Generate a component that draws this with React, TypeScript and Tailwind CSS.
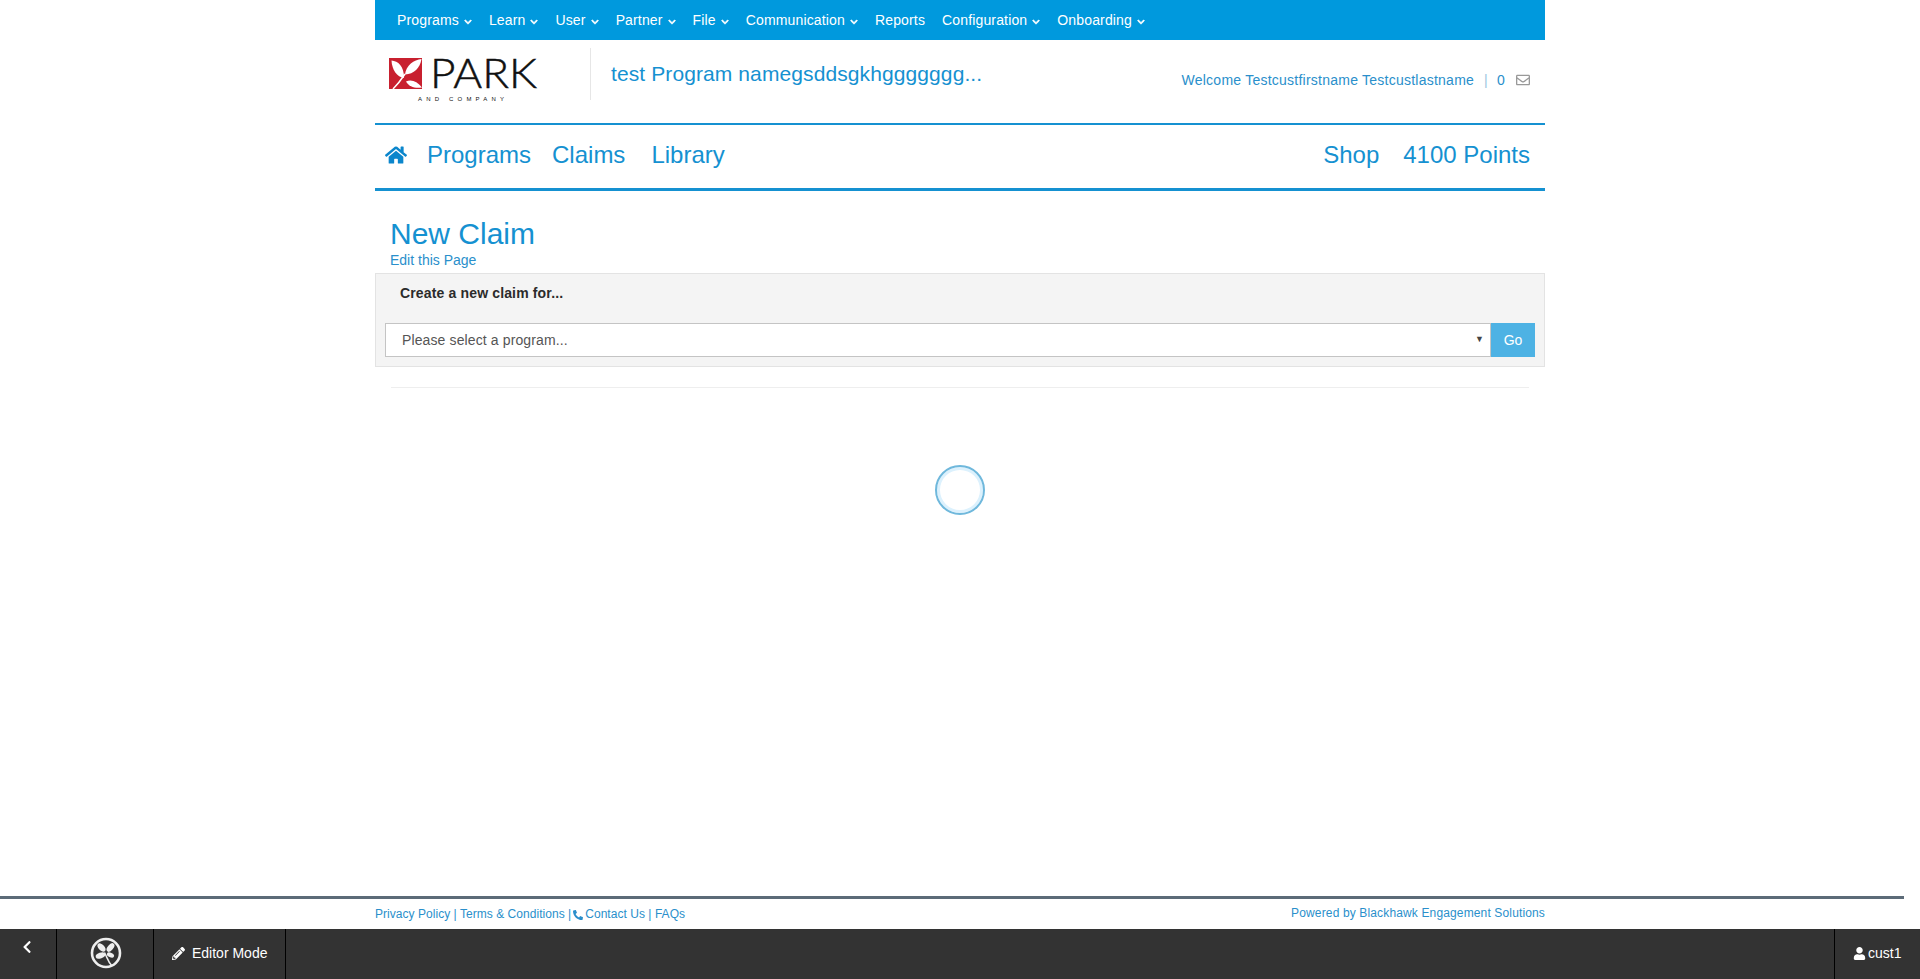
import { FaHome, FaChevronDown, FaRegEnvelope, FaPhone, FaPencilAlt, FaUser, FaChevronLeft } from "react-icons/fa";

const items: [string, boolean][] = [
  ["Programs", true],
  ["Learn", true],
  ["User", true],
  ["Partner", true],
  ["File", true],
  ["Communication", true],
  ["Reports", false],
  ["Configuration", true],
  ["Onboarding", true],
];

function ParkLogo() {
  return (
    <svg width="152" height="52" viewBox="0 0 152 52" className="block overflow-visible">
      <rect x="0" y="3" width="33" height="31" fill="#c8202f" />
      <path d="M2.5 5.5 C9 6 15 11 15 23 C8 22 3 15 2.5 5.5Z" fill="#fff" />
      <path d="M32.5 4 C25 5 17 10 16 19.5 C25 19 31 13 32.5 4Z" fill="#fff" />
      <path d="M17 26.5 C22 24 28 26 33 32.5 C26 33.5 20 32 17 26.5Z" fill="#fff" />
      <path d="M4 34 C9 29 12 25 16 19" stroke="#fff" strokeWidth="1.5" fill="none" />
      <text x="41" y="33" fontFamily="Lato, sans-serif" fontWeight="300" stroke="#111" strokeWidth="0.5" fontSize="41" fill="#111" textLength="107" lengthAdjust="spacingAndGlyphs">PARK</text>
      <text x="29" y="46" fontFamily="'Liberation Sans', sans-serif" fontSize="6" fill="#111" textLength="86">AND  COMPANY</text>
    </svg>
  );
}

function BarLogo() {
  return (
    <svg width="32" height="34" viewBox="0 0 32 34" className="block">
      <circle cx="16" cy="16" r="14" fill="none" stroke="#eee" strokeWidth="2.6" />
      <ellipse cx="11.5" cy="10.5" rx="5" ry="3" transform="rotate(45 11.5 10.5)" fill="#eee" />
      <ellipse cx="20.5" cy="10.5" rx="5" ry="2.8" transform="rotate(-50 20.5 10.5)" fill="#eee" />
      <ellipse cx="10.5" cy="18.5" rx="5" ry="2.8" transform="rotate(-20 10.5 18.5)" fill="#eee" />
      <ellipse cx="20.5" cy="18" rx="3.8" ry="2.3" transform="rotate(25 20.5 18)" fill="#eee" />
      <path d="M14.5 15.5 C17 20 18 25 22 29" fill="none" stroke="#eee" strokeWidth="1.5" />
    </svg>
  );
}

export default function App() {
  return (
    <div className="flex h-[979px] flex-col overflow-hidden bg-white font-['Liberation_Sans',Arial,sans-serif] text-[14px] text-[#0098da]">
      <div className="mx-auto flex w-[1170px] flex-1 flex-col">
        <nav className="flex h-10 shrink-0 items-center gap-[17px] bg-[#0099dd] pl-[22px] text-[14px] tracking-[0.15px] text-white">
          {items.map(([t, c]) => (
            <span key={t} className="flex items-center gap-[5px]">
              {t}
              {c && <FaChevronDown className="mt-[3px] stroke-current stroke-[40] text-[8px]" />}
            </span>
          ))}
        </nav>
        <header className="flex h-[83px] shrink-0 items-start">
          <div className="ml-[14px] mt-[15px] w-[152px] shrink-0"><ParkLogo /></div>
          <div className="ml-[49px] mt-[8px] h-[52px] w-px bg-[#e6e6e6]" />
          <div className="ml-[20px] mt-[20px] w-[400px] whitespace-nowrap text-[21px] leading-[28px] tracking-[0.1px] text-[#1591d1]">test Program namegsddsgkhggggggg...</div>
          <div className="ml-auto mr-[15px] mt-[30px] flex items-center text-[14px] leading-5 tracking-[0.24px] text-[#2a8fcb]">
            <span>Welcome Testcustfirstname Testcustlastname</span>
            <span className="ml-[10px] text-[#9cc5df]">|</span>
            <span className="ml-[9px]">0</span>
            <FaRegEnvelope className="ml-[11px] text-[14px] text-[#999]" />
          </div>
        </header>
        <div className="flex h-[68px] shrink-0 items-center border-y-[3px] border-t-2 border-[#1591d1] pb-[4px] text-[24px] text-[#1591d1]">
          <FaHome className="ml-[10px] text-[22px] text-[#0b86cc]" />
          <span className="ml-[20px]">Programs</span>
          <span className="ml-[21px]">Claims</span>
          <span className="ml-[26px]">Library</span>
          <span className="ml-auto">Shop</span>
          <span className="ml-[24px] mr-[15px]">4100 Points</span>
        </div>
        <h1 className="ml-[15px] mt-[25px] text-[30px] leading-[36px] text-[#1591d1]">New Claim</h1>
        <a className="ml-[15px] -mt-[2px] text-[14px] leading-[20px] text-[#2a8fcb]">Edit this Page</a>
        <section className="mt-[3px] h-[94px] shrink-0 border border-[#e3e3e3] bg-[#f4f4f4] pl-[9px] pr-[9px]">
          <div className="ml-[15px] mt-[9px] h-[40px] text-[14px] font-bold leading-5 tracking-[0.15px] text-[#2b2b2b]">Create a new claim for...</div>
          <div className="flex h-[34px]">
            <div className="flex flex-1 items-center justify-between border border-[#c4c4c4] bg-white pl-4 pr-[6px] text-[14px] tracking-[0.12px] text-[#555]">
              <span>Please select a program...</span>
              <span className="text-[9px] text-[#444]">▼</span>
            </div>
            <button className="w-11 bg-[#4db2e4] text-[14px] text-white">Go</button>
          </div>
        </section>
        <div className="mx-4 mt-5 h-px shrink-0 bg-[#eeeeee]" />
        <div className="flex justify-center pt-[77px]">
          <div className="size-[50px] rounded-full border-2 border-[#6fb8dc] shadow-[inset_0_0_0_3px_#dcf1fd]" />
        </div>
      </div>
      <footer className="shrink-0">
        <div className="mr-4 h-[3px] bg-[#5c6b78]" />
        <div className="mx-auto flex h-[30px] w-[1170px] justify-between text-[12px] leading-[17px] text-[#2a8fcb]">
          <div className="mt-[7px] flex items-center self-start tracking-[0.04px]">
            Privacy Policy | Terms &amp; Conditions |<FaPhone className="mx-[2px] text-[10px] -scale-x-100" />Contact Us | FAQs
          </div>
          <div className="mt-[6px] self-start tracking-[0.14px]">Powered by Blackhawk Engagement Solutions</div>
        </div>
        <div className="flex h-[50px] items-stretch bg-[#333] text-[14px] text-white">
          <div className="flex w-[57px] items-start justify-center border-r border-black pr-[2px] pt-[11px]"><FaChevronLeft className="text-[14px]" /></div>
          <div className="flex w-[97px] items-center justify-center border-r border-black pl-[2px]"><BarLogo /></div>
          <div className="flex w-[132px] items-center gap-[7px] border-r border-black pb-[2px] pl-[18px]"><FaPencilAlt className="text-[13px]" />Editor Mode</div>
          <div className="ml-auto flex w-[86px] items-center gap-[2px] border-l border-black pb-[2px] pl-[18px]"><FaUser className="text-[13px]" />cust1</div>
        </div>
      </footer>
    </div>
  );
}
